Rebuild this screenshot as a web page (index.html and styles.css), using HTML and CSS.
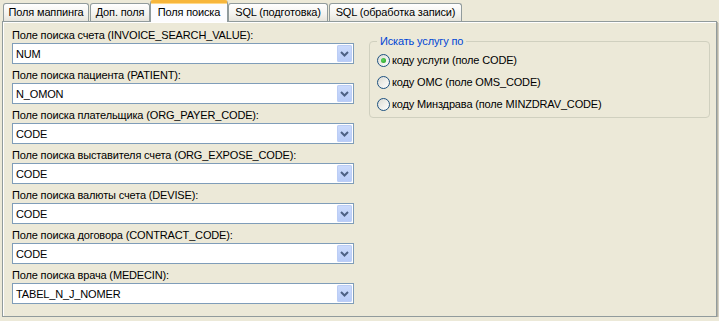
FILE: index.html
```html
<!DOCTYPE html>
<html lang="ru">
<head>
  <meta charset="UTF-8">
  <title>Поля поиска</title>
  <link rel="stylesheet" href="styles.css">
</head>
<body>

<div class="tabs">
  <div class="tab t1">Поля маппинга</div>
  <div class="tab t2">Доп. поля</div>
  <div class="tab t3 active">Поля поиска</div>
  <div class="tab t4">SQL (подготовка)</div>
  <div class="tab t5">SQL (обработка записи)</div>
</div>

<div class="panel">
  <div class="fields">
    <div class="field">
      <div class="label">Поле поиска счета (INVOICE_SEARCH_VALUE):</div>
      <div class="combo"><span class="value">NUM</span><span class="drop"><svg width="15" height="17" viewBox="0 0 15 17"><path d="M4 7 L7.5 10.5 L11 7" fill="none" stroke="#4d6185" stroke-width="2"/></svg></span></div>
    </div>
    <div class="field">
      <div class="label">Поле поиска пациента (PATIENT):</div>
      <div class="combo"><span class="value">N_OMON</span><span class="drop"><svg width="15" height="17" viewBox="0 0 15 17"><path d="M4 7 L7.5 10.5 L11 7" fill="none" stroke="#4d6185" stroke-width="2"/></svg></span></div>
    </div>
    <div class="field">
      <div class="label">Поле поиска плательщика (ORG_PAYER_CODE):</div>
      <div class="combo"><span class="value">CODE</span><span class="drop"><svg width="15" height="17" viewBox="0 0 15 17"><path d="M4 7 L7.5 10.5 L11 7" fill="none" stroke="#4d6185" stroke-width="2"/></svg></span></div>
    </div>
    <div class="field">
      <div class="label">Поле поиска выставителя счета (ORG_EXPOSE_CODE):</div>
      <div class="combo"><span class="value">CODE</span><span class="drop"><svg width="15" height="17" viewBox="0 0 15 17"><path d="M4 7 L7.5 10.5 L11 7" fill="none" stroke="#4d6185" stroke-width="2"/></svg></span></div>
    </div>
    <div class="field">
      <div class="label">Поле поиска валюты счета (DEVISE):</div>
      <div class="combo"><span class="value">CODE</span><span class="drop"><svg width="15" height="17" viewBox="0 0 15 17"><path d="M4 7 L7.5 10.5 L11 7" fill="none" stroke="#4d6185" stroke-width="2"/></svg></span></div>
    </div>
    <div class="field">
      <div class="label">Поле поиска договора (CONTRACT_CODE):</div>
      <div class="combo"><span class="value">CODE</span><span class="drop"><svg width="15" height="17" viewBox="0 0 15 17"><path d="M4 7 L7.5 10.5 L11 7" fill="none" stroke="#4d6185" stroke-width="2"/></svg></span></div>
    </div>
    <div class="field">
      <div class="label">Поле поиска врача (MEDECIN):</div>
      <div class="combo"><span class="value">TABEL_N_J_NOMER</span><span class="drop"><svg width="15" height="17" viewBox="0 0 15 17"><path d="M4 7 L7.5 10.5 L11 7" fill="none" stroke="#4d6185" stroke-width="2"/></svg></span></div>
    </div>
  </div>

  <div class="group">
    <div class="legend">Искать услугу по</div>
    <div class="radio checked"><span class="dot"></span>коду услуги (поле CODE)</div>
    <div class="radio"><span class="dot"></span>коду ОМС (поле OMS_CODE)</div>
    <div class="radio"><span class="dot"></span>коду Минздрава (поле MINZDRAV_CODE)</div>
  </div>
</div>

</body>
</html>
```

FILE: styles.css
```css
body {
  margin: 0;
  background-color: #ece9d8;
  font-family: "Liberation Sans", Arial, sans-serif;
  font-size: 11px;
  letter-spacing: -0.15px;
  color: #000;
}
.tabs {
  display: flex;
  align-items: flex-end;
  height: 21px;
  padding-left: 3px;
}
.tab {
  box-sizing: border-box;
  height: 18px;
  border: 1px solid #919b9c;
  border-bottom: none;
  border-radius: 3px 3px 0 0;
  background: linear-gradient(#ffffff, #f3f2ee 60%, #e6e4dc);
  text-align: center;
  line-height: 17px;
  white-space: nowrap;
}
.t1 { width: 86px; margin-right: 1px; }
.t2 { width: 60px; }
.t3 { width: 78px; }
.t4 { width: 100px; margin-right: 1px; }
.t5 { width: 133px; }
.tab.active {
  position: relative;
  height: 22px;
  margin-bottom: -1px;
  border-top: 3px solid #f7b63c;
  background: #fcfcfe;
  line-height: 18px;
  z-index: 1;
  box-shadow: inset 0 1px 0 #ffd88a;
}
.panel {
  box-sizing: border-box;
  display: flex;
  width: 715px;
  height: 296px;
  margin-left: 2px;
  padding: 7px 0 0 9px;
  border: 1px solid #919b9c;
  box-shadow: inset 1px 1px 0 #ffffff, 1px 1px 0 #b6b3a6, 2px 2px 0 #d4d1c3;
}
.fields {
  width: 342px;
}
.field {
  margin-bottom: 5px;
}
.label {
  height: 14px;
  line-height: 13px;
  white-space: nowrap;
}
.combo {
  box-sizing: border-box;
  display: flex;
  align-items: center;
  height: 21px;
  border: 1px solid #7f9db9;
  background: #fff;
  padding: 1px;
}
.value {
  flex: 1;
  padding-left: 2px;
}
.drop {
  width: 15px;
  height: 17px;
  border-radius: 2px;
  background: linear-gradient(#cddcfc, #b7cbf8);
  box-shadow: inset 0 0 0 1px #bccdf5;
}
.drop svg {
  display: block;
}
.group {
  position: relative;
  box-sizing: border-box;
  width: 341px;
  height: 77px;
  margin: 12px 0 0 15px;
  padding: 7px 0 0 7px;
  border: 1px solid #d0d0bf;
  border-radius: 4px;
}
.legend {
  position: absolute;
  top: -7px;
  left: 7px;
  padding: 0 3px;
  background: #ece9d8;
  color: #0046d5;
  line-height: 13px;
}
.radio {
  display: flex;
  align-items: center;
  height: 22px;
  white-space: nowrap;
}
.dot {
  box-sizing: border-box;
  width: 13px;
  height: 13px;
  margin-right: 2px;
  border: 1px solid #1c5180;
  border-radius: 50%;
  background: linear-gradient(135deg, #dcdcd4, #ffffff);
  display: flex;
  align-items: center;
  justify-content: center;
}
.radio.checked .dot::after {
  content: "";
  width: 5px;
  height: 5px;
  border-radius: 50%;
  background: radial-gradient(circle at 40% 40%, #5fd45f, #1b9a1b);
}
```
